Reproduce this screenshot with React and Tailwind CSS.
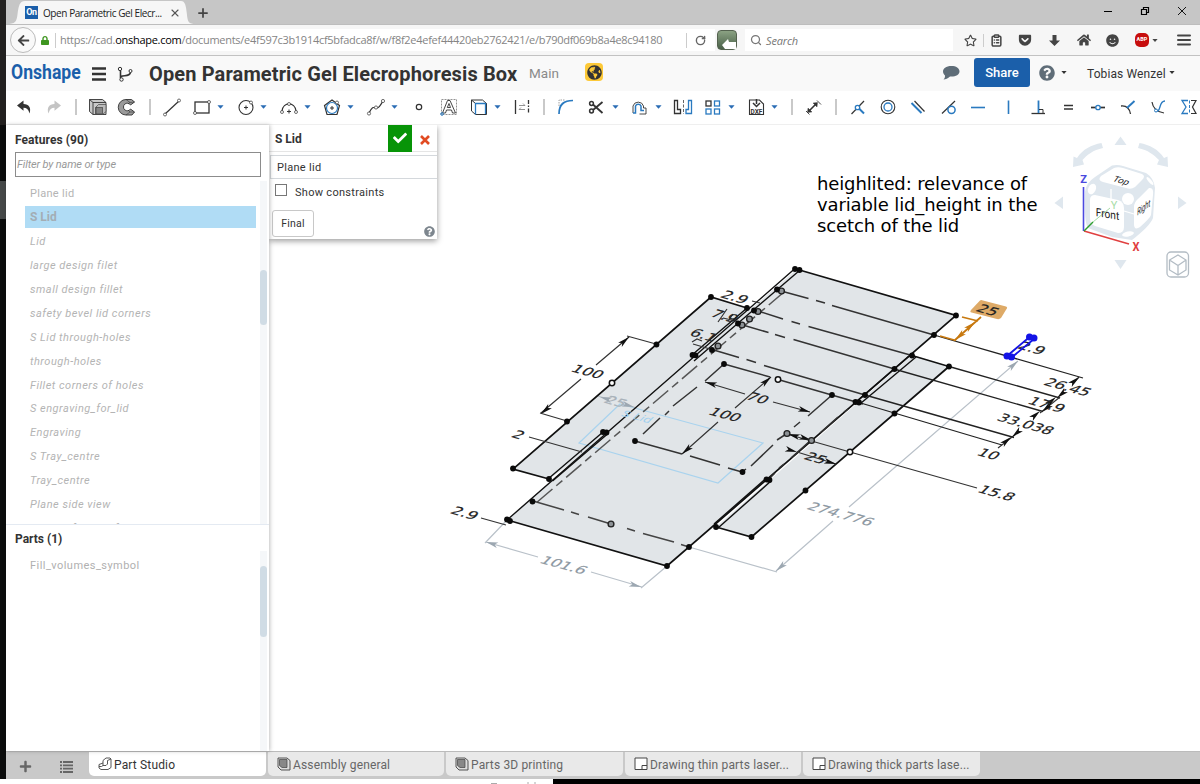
import React from "react";
import { ClipboardList, Search, RotateCw, X, Plus } from "lucide-react";
import { FaLock, FaArrowDown, FaHome, FaComment, FaSmile, FaGetPocket, FaQuestionCircle, FaArrowLeft, FaRegStar, FaGlobeAmericas, FaCheck, FaTimes, FaPlus } from "react-icons/fa";

const K = "#333";
const B = "#2a7ac0";

/* ---------- toolbar icons, each drawn in a 24 x 24 box ---------- */
const ICONS = {
  undo: <path d="M5 10.500 L11.500 5.500 V9 C17 9 19.500 13 17.500 18.500 C16.500 14.500 14.500 12.800 11.500 12.800 V15.800 Z" fill={K} />,
  redo: <path d="M19 10.500 L12.500 5.500 V9 C7 9 4.500 13 6.500 18.500 C7.500 14.500 9.500 12.800 12.500 12.800 V15.800 Z" fill="#c4c4c4" />,
  extrude: (
    <g stroke={K} strokeWidth=".9">
      <path d="M3.500 4.500 H16.500 L20 7.500 V19.500 H7 L3.500 16.500 Z" fill="#c9c9c9" />
      <path d="M7 7.500 H20 M7 7.500 V19.500 M3.500 4.500 L7 7.500" fill="none" />
      <path d="M9.500 12.500 L12.500 9.500 H20 V16.500 L16.500 19.500 H9.500 Z" fill="#bbb" strokeWidth=".6" />
      <rect x="10" y="12.500" width="6.500" height="6.500" fill="#858585" strokeWidth=".6" />
    </g>
  ),
  revolve: (
    <g stroke={K} strokeWidth=".9">
      <path d="M19.500 7 L16.500 4.500 H11 A7.500 7.500 0 0 0 11 20 H17 L19.500 17 L15.500 14 A3.800 3.800 0 1 1 15.500 10 Z" fill="#9a9a9a" />
      <path d="M11 4.500 L15 7.500 L19.500 7 M11 20 L15 17 L19.500 17 M15 7.500 L13 9 M15 17 L13 15" fill="none" strokeWidth=".6" />
    </g>
  ),
  line: <g stroke={K} fill="white"><path d="M5 19 L19 6" strokeWidth="1.200" /><circle cx="5" cy="19.500" r="1.500" strokeWidth=".7" /><circle cx="19" cy="5.500" r="1.500" strokeWidth=".7" /></g>,
  rect: <g stroke={K} fill="white"><rect x="5" y="7" width="14" height="11" strokeWidth="1.300" /><circle cx="5" cy="18" r="1.500" strokeWidth=".7" /><circle cx="19" cy="7" r="1.500" strokeWidth=".7" /></g>,
  circle: <g stroke={K} fill="none"><circle cx="12" cy="12.500" r="7" strokeWidth="1.100" /><path d="M12 10.500 V14.500 M10 12.500 H14" /><circle cx="17" cy="7.500" r="1.500" fill="white" strokeWidth=".7" /></g>,
  arc: <g stroke={K} fill="white"><path d="M5 16 C6 6.500 18 6.500 19 16" fill="none" strokeWidth="1.200" /><path d="M12 14.500 V18.500 M10 16.500 H14" /><circle cx="5" cy="17" r="1.500" strokeWidth=".7" /><circle cx="19" cy="17" r="1.500" strokeWidth=".7" /><circle cx="12" cy="9" r="1.500" strokeWidth=".7" /></g>,
  polygon: <g fill="none"><path d="M12 5 L19.500 10.500 L17 19.500 H7 L4.500 10.500 Z" stroke={K} strokeWidth="1.200" /><circle cx="12" cy="13" r="5.500" stroke={B} strokeWidth="1.200" /><path d="M12 11 V15 M10 13 H14" stroke={K} /><circle cx="17" cy="7.500" r="1.500" fill="white" stroke={K} strokeWidth=".7" /></g>,
  spline: <g stroke={K} fill="white"><path d="M5 18 C9 10 10 13 12 13 C15 13 16 11 19 6" fill="none" strokeWidth="1.200" /><circle cx="5" cy="18.500" r="1.600" strokeWidth=".7" /><circle cx="12" cy="12.500" r="1.600" strokeWidth=".7" /><circle cx="19" cy="6" r="1.600" strokeWidth=".7" /></g>,
  point: <circle cx="12" cy="12" r="2.700" fill="none" stroke={K} strokeWidth="1.200" />,
  text: (
    <g fill="none">
      <rect x="4.500" y="4.500" width="15" height="15" stroke="#777" strokeWidth=".8" strokeDasharray="2 1" />
      <path d="M5.500 18 L10.500 5.500 H13 L18.500 18 H15.500 L14.500 15 H9.500 L8.500 18 Z M10.300 12.500 H13.500 L12 8.500 Z" stroke={K} fill="white" strokeWidth=".9" />
      <circle cx="5" cy="19" r="1.300" stroke={B} />
    </g>
  ),
  use: <g fill="white" strokeWidth="1"><path d="M4.500 5 H15.500 L19.500 8.500 V19.500 H8.500 L4.500 16 Z" stroke={K} /><path d="M4.500 5 L8.500 8.500 H19.500" stroke={K} fill="none" /><path d="M8.500 19.500 V8.500 H18.500 V19" fill="none" stroke={B} strokeWidth="1.300" /></g>,
  constr: <g stroke={K} fill="none"><path d="M5.500 5 V19" strokeWidth="1.300" /><path d="M18.500 5 V19" strokeWidth="1.300" strokeDasharray="4 1.500 1.500 1.500" /><path d="M9 10.500 H15 M9 14.500 H15" strokeWidth=".8" stroke="#777" /><path d="M13 8.500 L15 10.500 M11 12.500 L9 14.500" strokeWidth=".7" stroke="#777" /></g>,
  fillet: <g fill="none"><path d="M5 11 V5 H11" stroke="#888" strokeWidth=".8" strokeDasharray="1.500 1" /><path d="M5 19 C5 9 10 5.500 19 5.500" stroke={B} strokeWidth="1.700" /></g>,
  trim: <g stroke={K} fill="none" strokeWidth="1.500"><path d="M18.500 7 L9 15 M18.500 18 L9 9.500" strokeWidth="1.800" /><circle cx="7.500" cy="8.500" r="1.900" /><circle cx="7.500" cy="16" r="1.900" /></g>,
  offset: <g fill="none"><path d="M5 18 V11 A5.500 5.500 0 0 1 15.500 11 V13 H18 V19 H11.500" stroke={K} strokeWidth=".9" /><path d="M5 18 H7.500 V11 A3 3 0 0 1 13 11 V15.500 H16" stroke={B} strokeWidth="1.500" /></g>,
  mirror: <g fill="none" strokeWidth="1.300"><path d="M3.500 5.500 H6.500 V14.500 H9.500 V18.500 H3.500 Z" stroke={K} /><path d="M12.500 5 V19" stroke="#555" strokeWidth=".9" strokeDasharray="3 1.500" /><path d="M20.500 5.500 H17.500 V14.500 H15 V18.500 H20.500 Z" stroke={B} /></g>,
  pattern: <g fill="none" strokeWidth="1.300"><rect x="5" y="6" width="5" height="5" stroke={K} /><rect x="13.500" y="6" width="5" height="5" stroke={B} /><rect x="5" y="14" width="5" height="5" stroke={B} /><rect x="13.500" y="14" width="5" height="5" stroke={B} /></g>,
  dxf: (
    <g>
      <path d="M4.500 5 H14.500 L18.500 9 V19.500 H4.500 Z" fill="white" stroke={K} strokeWidth="1.100" />
      <path d="M11.500 4 V9 M8 8 L11.500 11.500 L15 8" stroke={K} fill="none" strokeWidth="1.500" />
      <text x="11.500" y="18.500" textAnchor="middle" fontSize="6.500" fontWeight="700" fontFamily="Roboto, sans-serif" fill={K}>DXF</text>
    </g>
  ),
  dimension: <g stroke={K} fill={K}><path d="M8 16 L15 9" strokeWidth="1.600" /><path d="M6.500 17.500 L7 13 L11 17 Z M16.500 7.500 L12 8 L16 12 Z" strokeWidth=".4" /><path d="M5 16 L8.500 19.500 M16 5.500 L20 9.500" strokeWidth=".9" /></g>,
  coincident: <g fill="none"><path d="M5.500 19 L18 6" stroke={K} strokeWidth="1.200" /><path d="M12 12.500 L18 18.500" stroke={B} strokeWidth="2" /><circle cx="11.500" cy="12.500" r="2.200" stroke={B} fill="white" strokeWidth="1.300" /></g>,
  concentric: <g fill="none" strokeWidth="1.100"><circle cx="12" cy="12" r="6.800" stroke={K} /><circle cx="12" cy="12" r="4" stroke={B} strokeWidth="1.300" /></g>,
  parallel: <g fill="none"><path d="M5.500 8 L15.500 18" stroke={B} strokeWidth="2" /><path d="M8.500 6 L18.500 16.500" stroke={K} strokeWidth="1.200" /></g>,
  tangent: <g fill="none"><path d="M5 18.500 L18 6" stroke={K} strokeWidth="1.200" /><circle cx="14.500" cy="14.800" r="3.600" stroke={B} strokeWidth="1.500" /></g>,
  horizontal: <path d="M5 12.500 H19" stroke={B} strokeWidth="1.600" />,
  vertical: <path d="M12.500 5.500 V19" stroke={B} strokeWidth="1.600" />,
  perpendicular: <g fill="none"><path d="M4.500 18.500 H18" stroke={K} strokeWidth="1.300" /><path d="M11.500 5.500 V18" stroke={B} strokeWidth="1.800" /><path d="M12 14.500 H16 V18" stroke={K} /></g>,
  equal: <path d="M8 10.500 H17 M8 14 H17" stroke={K} strokeWidth="1.700" />,
  midpoint: <g fill="none"><path d="M5 12.500 H19" stroke={K} strokeWidth="1.700" /><circle cx="12" cy="12.500" r="2.200" fill="white" stroke={B} strokeWidth="1.300" /></g>,
  normal: <g fill="none"><path d="M5 11 C10 10.500 13.500 13 14.500 19" stroke={K} strokeWidth="1.300" /><path d="M11 13 L18.500 6" stroke={B} strokeWidth="1.900" /></g>,
  pierce: <g fill="none"><path d="M6 7 C7 14 11 17 18 18" stroke={K} strokeWidth="1.200" /><path d="M9 16 C16 18 12 6 19 6" stroke={B} strokeWidth="1.400" /><circle cx="10" cy="15.500" r="1.500" fill="white" stroke={B} /></g>,
  symmetric: <g fill="none"><path d="M11 5.500 H5 L9 12 L5 18.500 H11" stroke={B} strokeWidth="1.300" /><path d="M12.500 5.500 V19" stroke={B} strokeWidth="1" strokeDasharray="3 1.500" /><path d="M14 5.500 H19 L15.500 12 L19 18.500 H14" stroke={K} strokeWidth="1.200" /></g>,
};

/* [icon | "sep" | "caret", left margin] */
const TOOLS = [
  ["undo", "ml-1.5"], ["redo", "ml-1.5"], ["sep", "ml-[9px]"], ["extrude", "ml-[9px]"], ["revolve", "ml-[5px]"], ["sep", "ml-[10px]"],
  ["line", "ml-[9px]"], ["rect", "ml-1.5"], ["caret", "ml-[3px]"], ["circle", "ml-[9px]"], ["caret", "ml-0.5"], ["arc", "ml-[9px]"], ["caret", "ml-[3px]"],
  ["polygon", "ml-2"], ["caret", "ml-[3px]"], ["spline", "ml-[9px]"], ["caret", "ml-[3px]"], ["point", "ml-2"], ["text", "ml-1.5"], ["use", "ml-1.5"], ["caret", "ml-[3px]"],
  ["constr", "ml-2"], ["sep", "ml-[9px]"], ["fillet", "ml-[9px]"], ["trim", "ml-1.5"], ["caret", "ml-1"], ["offset", "ml-2"], ["caret", "ml-[3px]"],
  ["mirror", "ml-2"], ["pattern", "ml-1.5"], ["caret", "ml-[3px]"], ["dxf", "ml-[9px]"], ["caret", "ml-0.5"], ["sep", "ml-3"], ["dimension", "ml-2"], ["sep", "ml-[10px]"],
  ["coincident", "ml-[9px]"], ["concentric", "ml-1.5"], ["parallel", "ml-1.5"], ["tangent", "ml-[7px]"], ["horizontal", "ml-[5px]"], ["vertical", "ml-1.5"],
  ["perpendicular", "ml-[7px]"], ["equal", "ml-[5px]"], ["midpoint", "ml-1.5"], ["normal", "ml-1.5"], ["pierce", "ml-1.5"], ["symmetric", "ml-[7px]"],
];

function Caret({ className }) {
  return <svg viewBox="0 0 8 4" className={"shrink-0 " + className}><path d="M0.500 0 H7.500 L4 4 Z" fill="currentColor" /></svg>;
}

function Toolbar() {
  return (
    <div className="flex h-[34px] items-center overflow-hidden border-b border-[#efefef] bg-white pb-px">
      {TOOLS.map(([name, margin], i) => {
        if (name === "sep") return <div key={i} className={"h-4 w-0.5 shrink-0 bg-[#c9c9c9] " + margin} />;
        if (name === "caret") return <Caret key={i} className={"h-1 w-[7px] mr-px text-[#2a6cb4] " + margin} />;
        return <svg key={i} viewBox="0 0 24 24" className={"size-6 shrink-0 " + margin}>{ICONS[name]}</svg>;
      })}
    </div>
  );
}

function TabStrip() {
  return (
    <div className="flex h-[25px] items-end border-b border-[#bdbdbd] bg-[#c6c6c6]">
      <svg viewBox="0 0 18 24" preserveAspectRatio="none" className="h-[23px] w-[19px]"><path d="M0 24 C9 24 10 22 11 13 C12 5 13 0 18 0 V24 Z" fill="#f6f6f6" /></svg>
      <div className="flex h-[23px] w-[156px] items-center bg-[#f6f6f6]">
        <div className="flex size-[13px] shrink-0 items-center justify-center bg-[#1b5faa] font-['Roboto',sans-serif] text-[9px] font-bold tracking-[-0.300px] text-white">On</div>
        <div className="ml-[5px] w-[126px] whitespace-nowrap font-['Open_Sans',sans-serif] text-[10px] leading-4 tracking-[-0.420px] text-[#222]">Open Parametric Gel Elecr...</div>
        <X className="size-3 shrink-0 text-[#555]" strokeWidth={2.200} />
      </div>
      <svg viewBox="0 0 18 24" preserveAspectRatio="none" className="h-[23px] w-[15px]"><path d="M18 24 C9 24 8 22 7 13 C6 5 5 0 0 0 V24 Z" fill="#f6f6f6" /></svg>
      <Plus className="mb-[4px] h-[14px] w-[14px] text-[#444]" strokeWidth={3} />
      <div className="ml-auto flex h-full items-center gap-[27px] pr-[13px] pb-0.5 text-[#222]">
        <svg viewBox="0 0 10 10" className="size-2.5"><path d="M1 5.500 H9" stroke="black" /></svg>
        <svg viewBox="0 0 10 10" className="size-2.5"><path d="M1.500 3.500 H6.500 V8.500 H1.500 Z M3.500 3.500 V1.500 H8.500 V6.500 H6.500" fill="none" stroke="black" strokeWidth="1.200" /></svg>
        <svg viewBox="0 0 10 10" className="size-2.5"><path d="M1 1 L9 9 M9 1 L1 9" stroke="black" strokeWidth=".9" /></svg>
      </div>
    </div>
  );
}

function NavBar() {
  return (
    <div className="flex h-[31px] items-center border-b border-[#c2c2c2] bg-[#f6f6f6]">
      <div className="z-10 ml-1 flex size-[26px] shrink-0 items-center justify-center rounded-full border border-[#bbb] bg-[#f9f9f9]">
        <FaArrowLeft className="size-[13px] text-[#444]" />
      </div>
      <div className="-ml-2 flex h-[22px] w-[687px] shrink-0 items-center bg-white pl-[13px]">
        <FaLock className="h-[11px] w-2 text-[#3f9620]" />
        <div className="ml-[6px] h-[15px] w-px bg-[#ccc]" />
        <div className="ml-1 w-[606px] overflow-hidden whitespace-nowrap font-['Open_Sans',sans-serif] text-[11px] leading-5 tracking-[-0.280px] text-[#858585]">
          https://cad.<span className="text-black">onshape.com</span>/documents/e4f597c3b1914cf5bfadca8f/w/f8f2e4efef44420eb2762421/e/b790df069b8a4e8c94180
        </div>
        <div className="ml-[20px] h-[15px] w-px bg-[#ccc]" />
        <RotateCw className="ml-2 size-[11px] text-[#666]" strokeWidth={3} />
      </div>
      <div className="ml-0.5 flex h-5 w-5 shrink-0 items-end justify-end rounded-sm border border-[#54624f] bg-linear-to-b from-[#8ba283] to-[#4a6149]">
        <svg viewBox="0 0 14 10" className="h-2.5 w-3.5"><path d="M0 6 L6 0 L7 3 H14 V10 H3 Z" fill="white" /></svg>
      </div>
      <div className="ml-[8px] flex h-[22px] w-[208px] items-center bg-white pl-[5px]">
        <Search className="size-3 text-[#777]" strokeWidth={2.500} />
        <div className="ml-1 font-['Open_Sans',sans-serif] text-[11px] tracking-[-0.150px] text-[#777] italic">Search</div>
      </div>
      <FaRegStar className="ml-[11px] size-[13px] text-[#444]" />
      <div className="ml-[6px] h-[13px] w-px bg-[#ccc]" />
      <ClipboardList className="ml-[6px] size-[13px] text-[#444]" strokeWidth={2.800} />
      <FaGetPocket className="ml-[15px] size-[14px] text-[#444]" />
      <svg viewBox="0 0 13 13" className="ml-[16px] size-[13px]"><path d="M4.500 1 H8.500 V6.500 H12 L6.500 12 L1 6.500 H4.500 Z" fill="#444" /></svg>
      <FaHome className="ml-[16px] size-[14px] text-[#444]" />
      <FaSmile className="ml-[15px] size-[13px] text-[#444]" />
      <div className="ml-4 flex size-[14px] items-center justify-center rounded-[5px] bg-[#c70d0d] font-['Roboto',sans-serif] text-[5.500px] font-bold text-white">ABP</div>
      <Caret className="ml-[3px] h-[3px] w-[6px] text-[#444]" />
      <svg viewBox="0 0 14 12" className="ml-[19px] h-3 w-[14px] shrink-0"><path d="M1 1.500 H13 M1 6 H13 M1 10.500 H13" stroke="#444" strokeWidth="2" strokeLinecap="round" /></svg>
    </div>
  );
}

function Header() {
  return (
    <div className="flex h-[35px] items-center bg-[#f9f9f9] pb-[3px] font-['Roboto',sans-serif]">
      <div className="ml-[5px] w-[70px] whitespace-nowrap text-[20px] leading-6 font-bold text-[#1b5faa]"><span className="inline-block origin-left scale-x-[0.880]">Onshape</span></div>
      <svg viewBox="0 0 14 14" className="mt-1 ml-[11px] size-3.5"><path d="M0 1.500 H14 M0 7 H14 M0 12.500 H14" stroke="#333" strokeWidth="2.300" /></svg>
      <svg viewBox="0 0 16 16" className="mt-1 ml-[11px] size-4"><g fill="none" stroke="#333"><circle cx="3" cy="3" r="1.700" /><circle cx="13.500" cy="5" r="1.500" /><circle cx="4.500" cy="13.500" r="1.700" /><path d="M3.500 5 V12 M4 10.500 C7 9 12.500 11 13.500 6.500" strokeWidth="1.600" /></g></svg>
      <div className="mt-1 ml-4 w-[370px] whitespace-nowrap text-[20px] leading-6 font-bold tracking-[0.130px] text-[#333]">Open Parametric Gel Elecrophoresis Box</div>
      <div className="mt-1 ml-[10px] w-8 text-[13.500px] text-[#8a8a8a]">Main</div>
      <div className="ml-6 flex size-[18px] items-center justify-center rounded-sm bg-[#fdc938]"><FaGlobeAmericas className="size-[15px] text-[#333]" /></div>
      <svg viewBox="0 0 18 16" className="mt-0.5 ml-[339px] h-4 w-[18px]"><path d="M9.500 1 C14 1 17.500 3 17.500 6.500 C17.500 10 13 12 8 11.500 C6 13.500 3.500 14.500 1.500 14.500 C3 13 3 12 3 10.500 C-1 7 1 1 9.500 1 Z" fill="#5f6d78" /></svg>
      <div className="ml-[14px] flex h-[29px] w-14 items-center justify-center rounded-[3px] bg-[#1b5faa] text-[13px] font-medium text-white">Share</div>
      <FaQuestionCircle className="mt-0.5 ml-[9px] size-4 text-[#5f6d78]" />
      <Caret className="ml-[6px] h-[3px] w-[6px] text-[#333]" />
      <div className="mt-1 ml-[20px] w-[80px] whitespace-nowrap text-[12px] tracking-[0.100px] text-[#333]">Tobias Wenzel</div>
      <Caret className="ml-[2px] h-[3px] w-[6px] text-[#333]" />
    </div>
  );
}

const FEATURES = ["Plane lid", "S Lid", "Lid", "large design filet", "small design fillet", "safety bevel lid corners", "S Lid through-holes", "through-holes", "Fillet corners of holes", "S engraving_for_lid", "Engraving", "S Tray_centre", "Tray_centre", "Plane side view", "Plane left side of tray"];

function Sidebar() {
  return (
    <div className="z-10 flex w-[263px] shrink-0 flex-col bg-white font-['Roboto',sans-serif] shadow-[1px_0_4px_rgba(0,0,0,0.250)]">
      <div className="flex h-[27px] items-center pt-0.5 pl-[9px] text-[12px] font-bold tracking-[0.080px] text-[#333]">Features (90)</div>
      <div className="mr-2 ml-[9px] flex h-[25px] items-center border border-[#8c8c8c] pl-px text-[11px] tracking-[-0.150px] text-[#999] italic">Filter by name or type</div>
      <div className="mt-1 flex h-[344px] border-b border-[#e4eaf2]">
        <div className="flex-1 overflow-hidden pr-[4px] pl-[19px] text-[11px] text-[#b4b4b4]">
          {FEATURES.map((name, i) => (
            <div key={name} className="flex h-[23.900px] items-center">
              <div className={
                i === 1
                  ? "flex h-[22px] w-full items-center bg-[#b0dcf5] pl-[5px] text-[12px] font-bold text-[#a3adb4]"
                  : i === 0 ? "w-full pt-0.5 pl-[5px] tracking-[0.300px]" : "w-full pt-0.5 pl-[5px] tracking-[0.500px] italic"
              }>{name}</div>
            </div>
          ))}
        </div>
        <div className="mr-0.5 w-[7px] bg-[#f5f7f9]"><div className="mt-[89px] h-[55px] rounded-sm bg-[#d0dce5]" /></div>
      </div>
      <div className="flex h-[26px] items-center pt-0.5 pl-[9px] text-[12px] font-bold text-[#333]">Parts (1)</div>
      <div className="flex flex-1">
        <div className="flex-1 pt-[9px] pl-6 text-[11px] tracking-[0.450px] text-[#b0b0b0]">Fill_volumes_symbol</div>
        <div className="mr-0.5 w-[7px] bg-[#f5f7f9]"><div className="mt-[15px] h-[71px] rounded-sm bg-[#d0dce5]" /></div>
      </div>
    </div>
  );
}

function SketchDialog() {
  return (
    <div className="absolute top-0 left-0 flex h-[114px] w-[168px] flex-col bg-white font-['Roboto',sans-serif] text-[11px] text-[#333] shadow-[0_2px_6px_rgba(0,0,0,0.400)]">
      <div className="flex h-[27px] items-center border-b border-[#e5e5e5] pl-[6px]">
        <div className="w-[113px] pt-0.5 text-[12px] font-bold">S Lid</div>
        <div className="flex h-[27px] w-6 items-center justify-center bg-[#079407]"><FaCheck className="size-3.5 text-white" /></div>
        <svg viewBox="0 0 12 12" className="mt-1 ml-[7px] size-3"><path d="M2 2 L10 10 M10 2 L2 10" stroke="#e14b22" strokeWidth="2.600" /></svg>
      </div>
      <div className="mt-[3px] ml-px flex h-6 items-center border border-r-0 border-[#d4d8dc] pl-[6px] tracking-[0.300px]">Plane lid</div>
      <div className="mt-[4px] flex h-[18px] items-center pl-[6px]">
        <div className="mb-1 size-3 border border-[#777]" />
        <div className="ml-2 text-[11px] tracking-[0.300px]">Show constraints</div>
      </div>
      <div className="mt-[9px] flex items-end justify-between pr-0.5 pl-[3px]">
        <div className="flex h-[27px] w-[42px] items-center justify-center rounded-[3px] border border-[#c8c8c8] pt-0.5 text-[10.500px] tracking-[0.200px]">Final</div>
        <FaQuestionCircle className="size-[11px] text-[#7d868e]" />
      </div>
    </div>
  );
}

/* ---------- sketch drawing ---------- */
const LABELS = [
  ["2.9", 735, 297], ["7.9", 725, 316], ["6.1", 704, 335], ["100", 588, 371.500], ["100", 725.500, 414.500], ["70", 758, 398], ["2", 518.500, 434.500],
  ["2.9", 465, 513], ["25", 816, 458], ["25", 988, 310], ["2.9", 1032, 348], ["26.45", 1068, 387], ["17.9", 1047, 404.500], ["33.038", 1026, 424], ["10", 989, 454], ["15.8", 997, 493],
  ["101.6", 564, 565, "#8d98a2"], ["274.776", 841, 514, "#8d98a2"], ["25", 616, 401.500, "#a9b2ba"],
];
const DOTS = [
  [795, 269], [799.500, 270], [777, 289.500], [747, 308], [738, 323.500], [711, 297], [656.500, 344.500], [567, 421.500], [513, 468.500], [549, 479], [692.500, 355], [695.500, 355.300],
  [603, 432], [606.500, 432.500], [507, 519.500], [510, 521], [532.500, 501.500], [667, 566], [689, 547], [716, 527], [751.500, 537], [766.500, 479.500], [769.500, 480], [805.500, 490.500],
  [894.500, 413.500], [949, 366.500], [912, 355.500], [894.500, 369], [865, 395], [855.500, 402], [859, 402.500], [934, 335], [956, 315.500], [832, 395], [724, 364], [635, 441], [742.500, 472], [712, 350], [754, 310.500],
];
const OPEN = [[781.500, 291], [758, 311.500], [749.500, 319], [742, 325], [718, 346], [611, 524], [787, 433.500], [811.500, 440.500]];
const OPEN_WHITE = [[612, 383], [778, 379.500], [850, 452]];
/* tip x, tip y, direction in degrees */
const ARROWS = [
  [629, 337, -41], [541, 414, 139], [771, 377, -41], [682, 454, 139], [705, 382, 196], [810, 412, 16], [836, 464, 16], [797, 452, 16], [811, 440, 16], [788, 434, 196],
  [1079, 377, -41], [1057, 398, 139], [1056, 397, -41], [1042, 412, 139], [1040, 411, -41], [1012, 437, 139], [1011, 437, -41],
];
const GRAY_ARROWS = [[1018, 361, -41], [776, 571, 139], [486, 542, 196], [641, 587, 16], [634, 407, 16], [600, 397, 196]];

function Arrow({ at, fill }) {
  return <path d="M0 0 L-12 -2.800 L-9 0 L-12 2.800 Z" fill={fill} transform={`translate(${at[0]} ${at[1]}) rotate(${at[2]})`} />;
}

function Drawing() {
  return (
    <svg viewBox="269 125 931 626" className="block h-[626px] w-[931px]">
      <g fill="#e1e5e8">
        <path d="M797 269 L957 315.500 L667 566 L507 520 Z" />
        <path d="M711 297 L747 308 L760 330 L549 479 L513 469 Z" />
        <path d="M912 355 L949 366 L751 537 L716 527 Z" />
      </g>
      <path d="M620 404 L763 443 L718 483 L579 443 Z" fill="none" stroke="#a9d3ee" strokeWidth="1.200" />
      <g stroke="#b9c1c9" strokeWidth="1.200" fill="none">
        <path d="M507 520 L485 543 M667 566 L641 588 M486 542 L538 557 M591 572 L642 587" />
        <path d="M689 547 L777 572 M776 571 L833 521 M849 507 L1018 361" />
        <path d="M598 396 L608 399 M622 404 L637 408" />
      </g>
      <g stroke="#111" strokeWidth="1.700" fill="none">
        <path d="M796 269 L956 315.500 L667 566 L509 520.500" />
        <path d="M747 308 L711 297 L513 469 L549 479" />
        <path d="M912 355.500 L949 366.500 L751.500 537 L716 527" />
      </g>
      <g stroke="#111" strokeWidth="1.400" fill="none">
        <path d="M795 268.500 L507 520 M799.500 270.500 L694 361" />
        <path d="M747 308 L692 355 M603 432 L548 479 M607.500 434 L552.500 481" />
        <path d="M856 402 L911.500 354 M860.500 403.500 L916 357 M766 478.500 L714 524 M771 481 L718 528" />
      </g>
      <g stroke="#333" strokeWidth="1.500" fill="none">
        <path d="M784 292 L536 503" strokeDasharray="20 5 8 5" stroke="#555" />
        <path d="M533 501 L564 510 M571 512 L579 514.500 M588 517 L611 524 M627 528.500 L635 531 M643 533.500 L674 542 M681 544.500 L689 547" stroke="#444" />
        <path d="M781 291 L808.500 298.500 M816 300.500 L825 303 M832 305.500 L934 335" />
        <path d="M758 311 L783 319 M791.500 321.500 L800 324 M808.500 326.500 L912 355.500" />
        <path d="M741 324.500 L768.500 332.500 M775 334.500 L785 337.500 M793.500 339.500 L894.500 369" />
        <path d="M712 349.500 L739 357.500 M746.500 359.500 L756 362.500 M764 365.500 L865 395" />
        <path d="M724 364 L770 377 M778 379.500 L863 404" />
        <path d="M724 364 L705 381 M697 387 L673 406 M669 411 L665 415 M660 418 L643 434" />
        <path d="M635 441 L682 454 M690 456 L720 465 M728 468 L742 472" />
        <path d="M832 395 L808 416 M800 422 L794 427 M787 433.500 L777 440 M773 445 L751 466 M746 469 L742 472" />
        <path d="M848 409 L844 412 M838 417 L820 433 M811 440 L791 458 M784 464 L779 468 M775 473 L769 479" />
      </g>
      <g stroke="#333" strokeWidth="1.200" fill="none">
        <path d="M934 335 L1083 378 M949 366.500 L1060 398 M894 369 L1043 411.500 M865 395 L1014 437.500 M859 402.500 L1002 445" stroke="#222" strokeWidth="1.300" />
        <path d="M787 434 L850 452 L977 488 M529 437 L582 452 M481 518 L506 525 M752 301 L760 303" />
        <path d="M656 344 L627 336 M567 421 L540 413 M629 337 L596 365 M581 379 L541 413" />
        <path d="M771 377 L735 408 M718 422 L682 454 M705 382 L745 394 M773 402 L810 412 M797 452 L836 464" />
        <path d="M1079 377 L1073 384 M1060 397 L1040 413 M1016 434 L998 448 M692 342 L697 339 L702 341 M693 344 L710 349" />
        <path d="M727 309 L718 322 M733 314 L728 321 M723 318 L740 322" />
      </g>
      <path d="M980 300.500 Q981 299.500 983 300.500 L1006 306.500 Q1008 307.500 1006.500 309 L1001 318 Q999.500 319.500 997 319 L971.500 312.500 Q969.500 312 971 310 Z" fill="#deaa67" />
      <g stroke="#c8790f" strokeWidth="1.800" fill="none"><path d="M962 317 L978 321 M940 336 L956 340.500 M981 317 L955 340" /></g>
      <Arrow at={[975, 322, -41]} fill="#c8790f" />
      <Arrow at={[955, 340, 139]} fill="#c8790f" />
      {GRAY_ARROWS.map((a, i) => <Arrow key={i} at={a} fill="#9ca7b1" />)}
      {ARROWS.map((a, i) => <Arrow key={i} at={a} fill="#111" />)}
      {OPEN.map(([x, y], i) => <circle key={i} cx={x} cy={y} r="2.900" fill="#8d9296" stroke="#222" strokeWidth="1.400" />)}
      {OPEN_WHITE.map(([x, y], i) => <circle key={i} cx={x} cy={y} r="2.700" fill="white" stroke="#111" strokeWidth="1.500" />)}
      {DOTS.map(([x, y], i) => <circle key={i} cx={x} cy={y} r="2.900" fill="#0a0a0a" />)}
      {LABELS.map(([t, x, y, color], i) => (
        <text key={i} transform={`matrix(0.96 0.265 -0.600 0.600 ${x} ${y})`} y="5.800" textAnchor="middle" fontSize="16" fontFamily="DejaVu Sans, sans-serif" fill={color || "#222"} stroke={color || "#222"} strokeWidth=".25">{t}</text>
      ))}
      <text transform="matrix(0.96 0.265 -0.600 0.600 637 417)" y="4" textAnchor="middle" fontSize="12.500" fontFamily="DejaVu Sans, sans-serif" fill="#9fd0ef">S Lid</text>
      <g stroke="#1414e6" strokeWidth="1.800" fill="#1414e6"><path d="M1029.500 337 L1007 356 M1034 339 L1011 358" fill="none" /><circle cx="1029.500" cy="337" r="2.600" /><circle cx="1034" cy="338" r="2.600" /><circle cx="1007" cy="356" r="2.600" /><circle cx="1011.500" cy="357" r="2.600" /></g>

      {/* view cube */}
      <g fill="#dfe7ee">
        <path d="M1114.500 145 L1120.500 136.500 L1126.500 145 Z M1114.500 260 L1120.500 269 L1126.500 260 Z M1054.500 203 L1063 196.500 V209 Z M1186.500 203 L1178 196.500 V209 Z" />
        <path d="M1101.500 143 L1103 148 C1093 150 1087 155 1082.500 160 L1084 164.500 L1073 167 L1073.500 156.500 L1077 158 C1083 149 1091 145 1101.500 143 Z" />
        <path d="M1139.500 143 L1138 148 C1148 150 1154 155 1159 160 L1157 164.500 L1168 167 L1167.500 156.500 L1164 158 C1158 149 1150 145 1139.500 143 Z" />
        <path d="M1112 165.500 Q1118 164.500 1123 166 L1146 173 Q1154 178 1155 188 L1153 218 Q1150 226 1132 240 L1112 237 L1088 228 Q1084 223 1085 192 Q1086 183 1095 177 Z" />
      </g>
      <g fill="white">
        <path d="M1114 168 Q1118 166.500 1123 168 L1142 174 Q1146 176 1142 180 L1135 187 Q1131 190 1126 188 L1103 182 Q1097 180 1101 176 Z" />
        <path d="M1095 195 L1118 200 Q1124 202 1124 208 V227 Q1124 233 1118 233 L1095 226 Q1090 224 1090 218 V200 Q1090 195 1095 195 Z" />
        <path d="M1149 188 Q1154 187 1153 195 L1151 215 Q1150 218 1140 227 Q1134 231 1134 224 V207 Q1134 202 1139 198 Z" />
        <circle cx="1128" cy="199" r="6" /><ellipse cx="1092" cy="189" rx="3.800" ry="5.500" transform="rotate(25 1092 189)" />
        <ellipse cx="1128" cy="234" rx="6" ry="2.500" transform="rotate(-12 1128 234)" /><ellipse cx="1150" cy="181" rx="1.500" ry="5" transform="rotate(-40 1150 181)" />
      </g>
      <path d="M1111 189 V199 M1124 211 L1134 214" stroke="white" strokeWidth="1.300" />
      <path d="M1083.500 187 V231" stroke="#4a4ae0" strokeWidth="1.600" />
      <path d="M1084 231 L1129 244" stroke="#e04040" strokeWidth="1.600" />
      <path d="M1084 231 L1093 222" stroke="#2e9e2e" strokeWidth="1.500" /><path d="M1093 222 L1110 208" stroke="#a6dca6" strokeWidth="1" />
      <g fontFamily="Roboto, sans-serif" textAnchor="middle">
        <text x="1083.500" y="182.500" fontSize="11" fontWeight="700" fill="#4a4ae0">Z</text>
        <text x="1136" y="250.500" fontSize="12" fontWeight="700" fill="#e04040" textLength="7" lengthAdjust="spacingAndGlyphs">X</text>
        <text x="1114" y="208.500" fontSize="11" fill="#a6dca6">Y</text>
        <text transform="matrix(0.880 0.150 0 1 1107.500 218)" fontSize="11.500" fill="#222">Front</text>
        <text transform="matrix(0.850 0.240 -0.500 0.650 1119.500 183)" fontSize="11" fill="#222">Top</text>
        <text transform="matrix(0.550 -0.400 -0.060 1 1143.500 211)" fontSize="10.500" fill="#222">Right</text>
      </g>
      <g fill="none" stroke="#b3bcc4" strokeWidth="1.300"><rect x="1167" y="252" width="21.500" height="25" rx="4" /><path d="M1178 255 L1186 260 V270 L1178 275 L1169.500 270 V260 Z M1169.500 260 L1178 265.500 L1186 260 M1178 265.500 V275" /></g>
    </svg>
  );
}

function BottomTab({ icon, label, active, width }) {
  return (
    <div className={"flex h-6 shrink-0 items-center rounded-b-[5px] " + width + (active ? " bg-white pl-[9px] text-[#333]" : " bg-[#e9e9e9] pl-[9px] text-[#666]")}>
      <svg viewBox="0 0 14 14" className="size-[14px] shrink-0">
        {icon === "part" && <path d="M1 7.500 L5 6 V3.500 L8 1 H12 L13 2 V10.500 L10 12.500 H3 L1 11 Z M5 6 V8.500 H8 L9.500 7 V3.500 L13 2 M1 9.500 H3.500 L5 8.500" fill="none" stroke="#444" strokeWidth=".9" />}
        {icon === "asm" && <g stroke="#444" strokeWidth=".9"><path d="M1 1 H10 L13 3.500 V13 H4 L1 10 Z" fill="#ddd" /><path d="M2.500 2.500 H10 V10.500 H5 L2.500 8.500 Z" fill="#888" strokeWidth=".7" /></g>}
        {icon === "draw" && <path d="M1 1 H13 V12.500 H1 Z M8 12.500 V8.500 H13" fill="white" stroke="#444" />}
      </svg>
      <div className="ml-[2px] pt-0.5 whitespace-nowrap">{label}</div>
    </div>
  );
}

function BottomBar() {
  return (
    <div className="flex h-7 border-t border-[#bbb] bg-[#c9c9c9] font-['Roboto',sans-serif] text-[12px] tracking-[0.150px]">
      <div className="flex h-[27px] w-[83px] shrink-0 items-center pt-0.5">
        <FaPlus className="ml-[13px] size-[13px] text-[#666]" />
        <svg viewBox="0 0 13 12" className="ml-7 h-3 w-[13px]"><path d="M0 1 H2 M3 1 H13 M0 4.300 H2 M3 4.300 H13 M0 7.600 H2 M3 7.600 H13 M0 11 H2 M3 11 H13" stroke="#666" strokeWidth="1.800" /></svg>
      </div>
      <div className="flex gap-0.5">
        <BottomTab icon="part" label="Part Studio" active width="w-[177px]" />
        <BottomTab icon="asm" label="Assembly general" width="w-[176px]" />
        <BottomTab icon="asm" label="Parts 3D printing" width="w-[177px]" />
        <BottomTab icon="draw" label="Drawing thin parts laser..." width="w-[176px]" />
        <BottomTab icon="draw" label="Drawing thick parts lase..." width="w-[177px]" />
      </div>
    </div>
  );
}

export default function App() {
  return (
    <div className="flex h-[784px] w-[1200px] flex-col overflow-hidden bg-white leading-none">
      <div className="flex h-[779px]">
        <div className="flex w-1.5 shrink-0 flex-col bg-[#0b0c0c]">
          <div className="h-[125px] bg-[#22201f]" />
          <div className="mt-[56px] h-[38px] bg-[#454848]" />
        </div>
        <div className="flex w-[1194px] flex-col">
          <TabStrip />
          <NavBar />
          <Header />
          <Toolbar />
          <div className="flex h-[626px]">
            <Sidebar />
            <div className="relative flex-1 overflow-hidden bg-white">
              <Drawing />
              <div className="absolute top-[48px] left-[548px] whitespace-nowrap font-['DejaVu_Sans',sans-serif] text-[18px] leading-[21px] tracking-[-0.120px] text-black">
                heighlited: relevance of<br />variable lid_height in the<br />scetch of the lid
              </div>
              <SketchDialog />
            </div>
          </div>
          <BottomBar />
        </div>
      </div>
      <div className="flex h-[5px] bg-black">
        <div className="w-[553px] bg-white"><svg viewBox="0 0 60 5" className="ml-[490px] h-[5px] w-[60px]"><path d="M1 4.500 H7 M38 3 V5 M45 3 V5" stroke="#aaa" /></svg></div>
      </div>
    </div>
  );
}
